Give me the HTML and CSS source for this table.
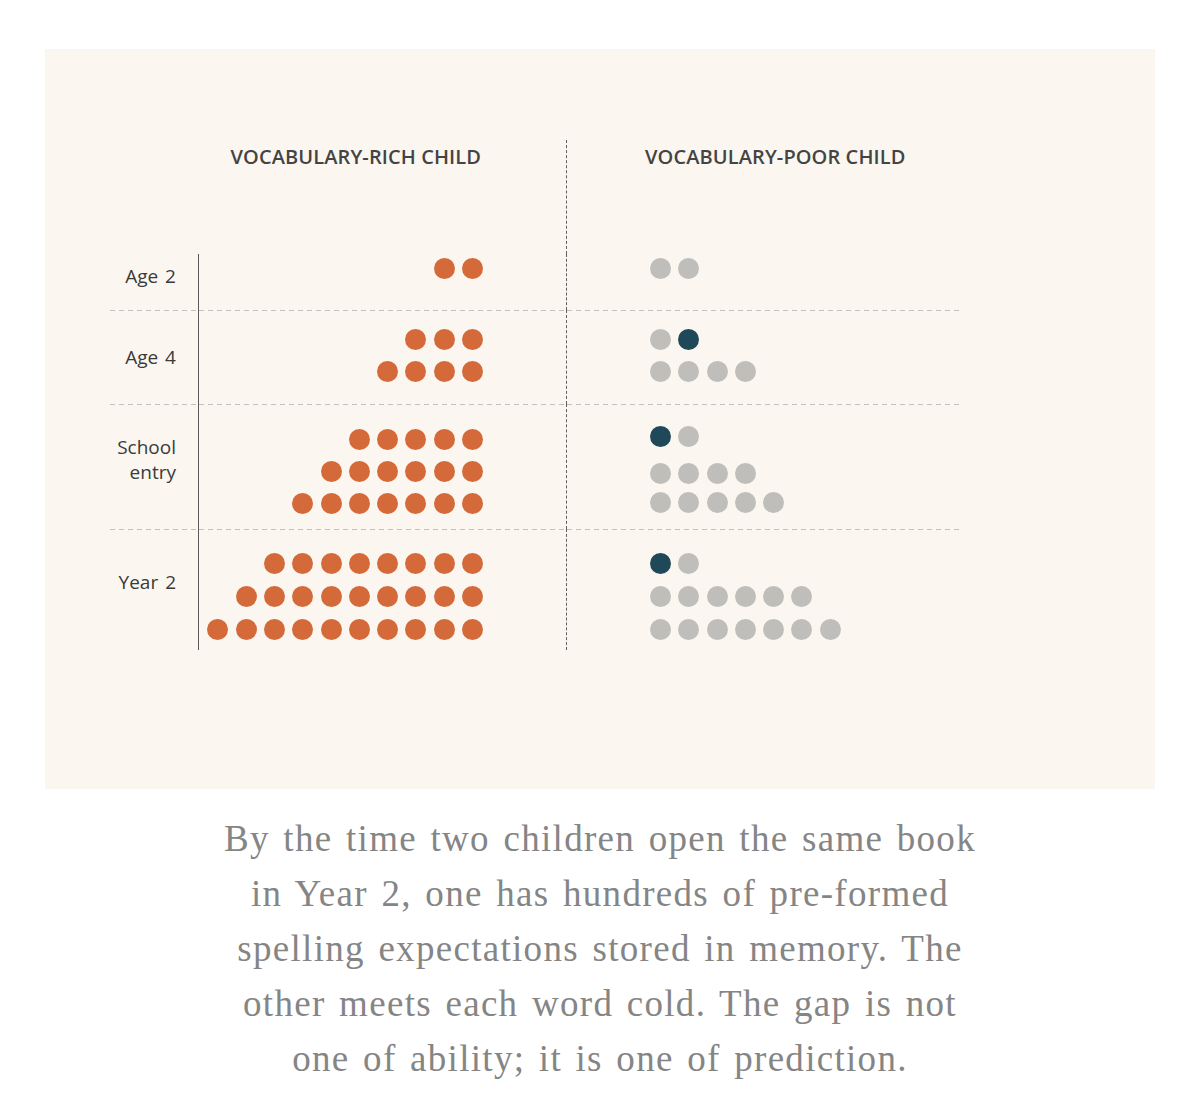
FILE: index.html
```html
<!DOCTYPE html>
<html lang="en">
<head>
<meta charset="utf-8">
<title>Vocabulary-rich vs vocabulary-poor child</title>
<link rel="stylesheet" href="styles.css">
</head>
<body>
<div class="panel">
  <div class="chart">
    <div class="cell label head"></div>
    <div class="cell left head"><span class="title">VOCABULARY-RICH CHILD</span></div>
    <div class="cell right head"><span class="title">VOCABULARY-POOR CHILD</span></div>

    <div class="cell label s1">Age 2</div>
    <div class="cell left s1">
      <div class="dots"><i class="d o"></i><i class="d o"></i></div>
    </div>
    <div class="cell right s1">
      <div class="dots"><i class="d g"></i><i class="d g"></i></div>
    </div>

    <div class="cell label s2 lined">Age 4</div>
    <div class="cell left s2 lined">
      <div class="dots"><i class="d o"></i><i class="d o"></i><i class="d o"></i></div>
      <div class="dots"><i class="d o"></i><i class="d o"></i><i class="d o"></i><i class="d o"></i></div>
    </div>
    <div class="cell right s2 lined">
      <div class="dots"><i class="d g"></i><i class="d t"></i></div>
      <div class="dots"><i class="d g"></i><i class="d g"></i><i class="d g"></i><i class="d g"></i></div>
    </div>

    <div class="cell label s3 lined"><span>School<br>entry</span></div>
    <div class="cell left s3 lined">
      <div class="dots"><i class="d o"></i><i class="d o"></i><i class="d o"></i><i class="d o"></i><i class="d o"></i></div>
      <div class="dots"><i class="d o"></i><i class="d o"></i><i class="d o"></i><i class="d o"></i><i class="d o"></i><i class="d o"></i></div>
      <div class="dots"><i class="d o"></i><i class="d o"></i><i class="d o"></i><i class="d o"></i><i class="d o"></i><i class="d o"></i><i class="d o"></i></div>
    </div>
    <div class="cell right s3 lined">
      <div class="dots"><i class="d t"></i><i class="d g"></i></div>
      <div class="dots"><i class="d g"></i><i class="d g"></i><i class="d g"></i><i class="d g"></i></div>
      <div class="dots"><i class="d g"></i><i class="d g"></i><i class="d g"></i><i class="d g"></i><i class="d g"></i></div>
    </div>

    <div class="cell label s4 lined">Year 2</div>
    <div class="cell left s4 lined">
      <div class="dots"><i class="d o"></i><i class="d o"></i><i class="d o"></i><i class="d o"></i><i class="d o"></i><i class="d o"></i><i class="d o"></i><i class="d o"></i></div>
      <div class="dots"><i class="d o"></i><i class="d o"></i><i class="d o"></i><i class="d o"></i><i class="d o"></i><i class="d o"></i><i class="d o"></i><i class="d o"></i><i class="d o"></i></div>
      <div class="dots"><i class="d o"></i><i class="d o"></i><i class="d o"></i><i class="d o"></i><i class="d o"></i><i class="d o"></i><i class="d o"></i><i class="d o"></i><i class="d o"></i><i class="d o"></i></div>
    </div>
    <div class="cell right s4 lined">
      <div class="dots"><i class="d t"></i><i class="d g"></i></div>
      <div class="dots"><i class="d g"></i><i class="d g"></i><i class="d g"></i><i class="d g"></i><i class="d g"></i><i class="d g"></i></div>
      <div class="dots"><i class="d g"></i><i class="d g"></i><i class="d g"></i><i class="d g"></i><i class="d g"></i><i class="d g"></i><i class="d g"></i></div>
    </div>
  </div>
</div>
<p class="caption">By the time two children open the same book<br>in Year 2, one has hundreds of pre-formed<br>spelling expectations stored in memory. The<br>other meets each word cold. The gap is not<br>one of ability; it is one of prediction.</p>
</body>
</html>
```

FILE: styles.css
```css
html, body {
  margin: 0;
  padding: 0;
  background: #ffffff;
}

body {
  font-family: "Open Sans", "Noto Sans", sans-serif;
}

.panel {
  box-sizing: border-box;
  width: 1110px;
  height: 740px;
  margin: 49px 0 0 45px;
  padding: 91px 0 0 65px;
  background: #fbf7f0;
}

.chart {
  display: grid;
  grid-template-columns: 88px 368px 394px;
  grid-template-rows: 114px 56px 94px 125px 121px;
}

.cell {
  box-sizing: border-box;
}

.lined {
  background-image: linear-gradient(to right, #c3c1bd 0, #c3c1bd 5px, transparent 5px);
  background-size: 9px 1px;
  background-repeat: repeat-x;
  background-position: 0 0;
}

.left {
  padding-right: 83px;
}

.left.s1, .left.s2, .left.s3, .left.s4 {
  border-left: 1px solid #5a5a5a;
}

.right {
  border-left: 1px dashed #5e5e5e;
  padding-left: 83px;
}

.head {
  padding-top: 7px;
}

.title {
  display: block;
  font-size: 20px;
  line-height: 20px;
  font-weight: 600;
  color: #444444;
  letter-spacing: 0.1px;
  white-space: nowrap;
}

.left .title {
  text-align: right;
  margin-right: 2px;
}

.right .title {
  margin-left: -5px;
}

.label {
  display: flex;
  align-items: center;
  justify-content: flex-end;
  padding-right: 22px;
  text-align: right;
  font-size: 19px;
  line-height: 25px;
  color: #3a3a3a;
  word-spacing: 2px;
}

.label.s1 { padding-bottom: 12px; }
.label.s3 { padding-bottom: 13px; }
.label.s4 { padding-bottom: 14px; }

.dots {
  display: flex;
  gap: 7.3px;
}

.left .dots {
  justify-content: flex-end;
}

.d {
  display: block;
  width: 21px;
  height: 21px;
  border-radius: 50%;
  flex: none;
}

.o { background: #d4693a; }
.g { background: #bfbebb; }
.t { background: #1f4959; }

.left.s1, .right.s1 { padding-top: 4px; }

.s2.left, .s2.right { padding-top: 19px; }
.s2 .dots + .dots { margin-top: 11px; }

.s3.left { padding-top: 25px; }
.s3.left .dots + .dots { margin-top: 11px; }

.s3.right { padding-top: 22px; }
.s3.right .dots:nth-child(2) { margin-top: 16px; }
.s3.right .dots:nth-child(3) { margin-top: 8px; }

.s4.left, .s4.right { padding-top: 24px; }
.s4 .dots + .dots { margin-top: 12px; }

.caption {
  margin: 22px 0 0 0;
  text-align: center;
  font-family: "Liberation Serif", "Times New Roman", serif;
  font-size: 37px;
  line-height: 55px;
  color: #858585;
  letter-spacing: 1.3px;
  word-spacing: 3px;
}
```
